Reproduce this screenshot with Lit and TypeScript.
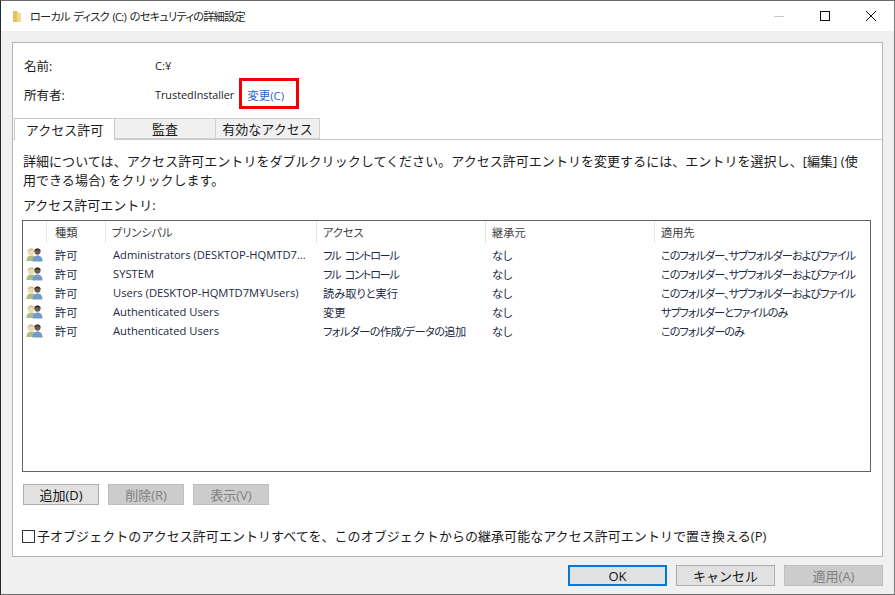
import { LitElement, html, css, svg } from "lit";
import { customElement } from "lit/decorators.js";
import { styleMap } from "lit/directives/style-map.js";

const rows = [
  { kind: "許可", who: "Administrators (DESKTOP-HQMTD7...", access: "フル コントロール", squeeze: -1.3, from: "なし", to: "このフォルダー、サブフォルダーおよびファイル" },
  { kind: "許可", who: "SYSTEM", access: "フル コントロール", squeeze: -1.3, from: "なし", to: "このフォルダー、サブフォルダーおよびファイル" },
  { kind: "許可", who: "Users (DESKTOP-HQMTD7M¥Users)", access: "読み取りと実行", squeeze: 0, from: "なし", to: "このフォルダー、サブフォルダーおよびファイル" },
  { kind: "許可", who: "Authenticated Users", access: "変更", squeeze: 0, from: "なし", to: "サブフォルダーとファイルのみ" },
  { kind: "許可", who: "Authenticated Users", access: "フォルダーの作成/データの追加", squeeze: -0.6, from: "なし", to: "このフォルダーのみ" },
];

const usersIcon = svg`<svg class="uicon" width="17" height="15" viewBox="0 0 17 15">
  <path d="M0.5 14 C0.5 10 2.5 8.5 5.5 8.5 C8.5 8.5 10 10 10 14 Z" fill="#a9bd84"/>
  <circle cx="5" cy="4.8" r="3.5" fill="#e8dcb8"/>
  <path d="M1.6 4.8 C1.6 .8 8.4 .4 8.5 4.1 C6.5 2.8 3.8 3.1 1.6 4.8 Z" fill="#d3c592"/>
  <path d="M6.5 14.5 C6.5 10.5 8.5 8.5 11.5 8.5 C14.5 8.5 16.5 10.5 16.5 14.5 Z" fill="#6f9ccb"/>
  <circle cx="11.5" cy="4.6" r="3.1" fill="#6e5a48"/>
  <path d="M8.4 4.1 C8.6 .6 14.4 .6 14.6 4.1 C12.5 2.8 10.5 2.8 8.4 4.1 Z" fill="#33302e"/>
</svg>`;

@customElement("app-root")
export class AppRoot extends LitElement {
  static styles = css`
    :host {
      display: block;
      width: 895px;
      height: 595px;
      font-family: "Open Sans", "Noto Sans CJK JP", sans-serif;
      font-size: 11.2px;
      color: #1a1a1a;
    }
    * { box-sizing: border-box; }
    .window {
      width: 895px;
      height: 595px;
      background: #f0f0f0;
      border-top: 1px solid #6b6b6b;
      border-left: 1px solid #1c2a3a;
      border-right: 1px solid #7a7a7a;
      border-bottom: 1px solid #6b6b6b;
      display: flex;
      flex-direction: column;
    }
    .title {
      height: 30px;
      background: #fff;
      display: flex;
      align-items: center;
      padding-left: 11px;
      flex: none;
    }
    .title .text { margin-left: 8px; font-size: 11.2px; letter-spacing: -0.75px; word-spacing: 1.5px; flex: 1; color: #222; font-feature-settings: "palt"; }
    .winbtns { display: flex; }
    .winbtn { width: 46px; height: 30px; display: flex; align-items: center; justify-content: center; }
    .panel {
      margin: 11px 11px 0 11px;
      width: 871px;
      height: 515px;
      flex: none;
      background: #fff;
      border: 1px solid #b4b4b4;
      padding: 8px 0 0 0;
      display: flex;
      flex-direction: column;
    }
    .info { display: grid; grid-template-columns: 131px auto auto 1fr; padding-left: 11px; }
    .info > div { height: 29px; display: flex; align-items: center; }
    .info .k { font-size: 12.5px; }
    .info .g { grid-column: 2 / 5; }
    .info .owner { font-size: 10.8px; }
    .link {
      color: #2a66c8;
      margin-left: 8px;
      margin-bottom: 3px;
      padding-top: 3px;
      padding-left: 5px;
      outline: 3px solid #f00000;
      height: 25px;
      width: 54px;
      display: flex;
      align-items: center;
      font-size: 11.5px;
    }
    .tabs {
      display: flex;
      height: 22px;
      margin-top: 9px;
      padding-left: 1px;
      border-bottom: 1px solid #c8c8c8;
      flex: none;
    }
    .tab {
      height: 21px;
      background: #f0f0f0;
      border: 1px solid #d0d0d0;
      border-left: 0;
      display: flex;
      align-items: center;
      justify-content: center;
      font-size: 13px;
      width: 101px;
    }
    .tab.active {
      background: #fff;
      height: 22px;
      border: 1px solid #c8c8c8;
      border-bottom: 0;
    }
    .tab.wide { width: 104px; }
    .content { padding: 12px 10px 0 9px; flex: 1; display: flex; flex-direction: column; }
    .desc { line-height: 19px; font-size: 13px; letter-spacing: 0.04px; white-space: nowrap; padding-left: 1px; }
    .label { margin-top: 6px; height: 19px; line-height: 19px; font-size: 13px; padding-left: 1px; }
    .list {
      margin-top: 5px;
      width: 849px;
      height: 252px;
      border: 1px solid #646464;
      flex: none;
      overflow: hidden;
      font-feature-settings: "palt";
    }
    .row, .head {
      display: grid;
      grid-template-columns: 24px 59px 211px 169px 169px 1fr;
      white-space: nowrap;
    }
    .head { height: 24px; padding-bottom: 2px; }
    .head > div { border-right: 1px solid #e5e5e5; padding-left: 6px; display: flex; align-items: center; color: #3c3c3c; }
    .head > div:nth-child(2) { padding-left: 8px; }
    .head > div:last-child { border-right: 0; }
    .row { height: 19px; align-items: center; }
    .row > div { padding-left: 6px; overflow: hidden; color: #1c2a44; }
    .row > div:nth-child(2) { padding-left: 8px; }
    .row > div:nth-child(3) { padding-left: 7px; }
    .row > .ic { padding-left: 3px; display: flex; align-items: center; }
    .row > .access { word-spacing: 3px; }
    .row > .to { letter-spacing: -1px; }
    .actions { display: flex; gap: 9px; margin-top: 12px; padding-left: 1px; }
    .btn {
      height: 21px;
      width: 76px;
      background: #e1e1e1;
      border: 1px solid #adadad;
      display: flex;
      align-items: center;
      justify-content: center;
      color: #111;
      font-size: 13px;
    }
    .btn.dis { background: #cccccc; border-color: #bfbfbf; color: #808080; }
    .check { display: flex; align-items: center; margin-top: 24px; gap: 2px; height: 14px; font-size: 13px; letter-spacing: 0.04px; white-space: nowrap; }
    .check .t { padding-bottom: 2px; }
    .box { width: 13px; height: 13px; border: 1px solid #333; background: #fff; flex: none; }
    .footer { display: flex; justify-content: flex-end; gap: 9px; margin-top: 8px; padding-right: 11px; }
    .footer .btn { width: 99px; }
    .footer .ok { border: 2px solid #0078d7; }
  `;

  render() {
    return html`<div class="window">
      <div class="title">
        <svg width="10" height="13" viewBox="0 0 10 13">
          <path d="M1 1 H4 L6 2 V12 H1 Z" fill="#e6c25c"/>
          <path d="M5 3 H9 V12 H5 Z" fill="#f4d98a"/>
        </svg>
        <span class="text">ローカル ディスク (C:) のセキュリティの詳細設定</span>
        <div class="winbtns">
          <div class="winbtn"><svg width="10" height="10" viewBox="0 0 10 10"><path d="M0 5.5H10" stroke="#c8c8c8"/></svg></div>
          <div class="winbtn"><svg width="10" height="10" viewBox="0 0 10 10"><rect x=".5" y=".5" width="9" height="9" fill="none" stroke="#111"/></svg></div>
          <div class="winbtn"><svg width="10" height="10" viewBox="0 0 10 10"><path d="M0 0L10 10M10 0L0 10" stroke="#111"/></svg></div>
        </div>
      </div>
      <div class="panel">
        <div class="info">
          <div class="k">名前:</div><div class="g">C:¥</div>
          <div class="k">所有者:</div><div class="owner">TrustedInstaller</div><div><span class="link">変更(C)</span></div><div></div>
        </div>
        <div class="tabs">
          <div class="tab active">アクセス許可</div>
          <div class="tab">監査</div>
          <div class="tab wide">有効なアクセス</div>
        </div>
        <div class="content">
          <div class="desc">詳細については、アクセス許可エントリをダブルクリックしてください。アクセス許可エントリを変更するには、エントリを選択し、[編集] (使<br>用できる場合) をクリックします。</div>
          <div class="label">アクセス許可エントリ:</div>
          <div class="list">
            <div class="head"><div></div><div>種類</div><div>プリンシパル</div><div>アクセス</div><div>継承元</div><div>適用先</div></div>
            ${rows.map((r) => html`<div class="row">
              <div class="ic">${usersIcon}</div>
              <div>${r.kind}</div>
              <div>${r.who}</div>
              <div class="access" style=${styleMap({ letterSpacing: `${r.squeeze}px` })}>${r.access}</div>
              <div>${r.from}</div>
              <div class="to">${r.to}</div>
            </div>`)}
          </div>
          <div class="actions">
            <div class="btn">追加(D)</div>
            <div class="btn dis">削除(R)</div>
            <div class="btn dis">表示(V)</div>
          </div>
          <div class="check"><span class="box"></span><span class="t">子オブジェクトのアクセス許可エントリすべてを、このオブジェクトからの継承可能なアクセス許可エントリで置き換える(P)</span></div>
        </div>
      </div>
      <div class="footer">
        <div class="btn ok">OK</div>
        <div class="btn">キャンセル</div>
        <div class="btn dis">適用(A)</div>
      </div>
    </div>`;
  }
}
